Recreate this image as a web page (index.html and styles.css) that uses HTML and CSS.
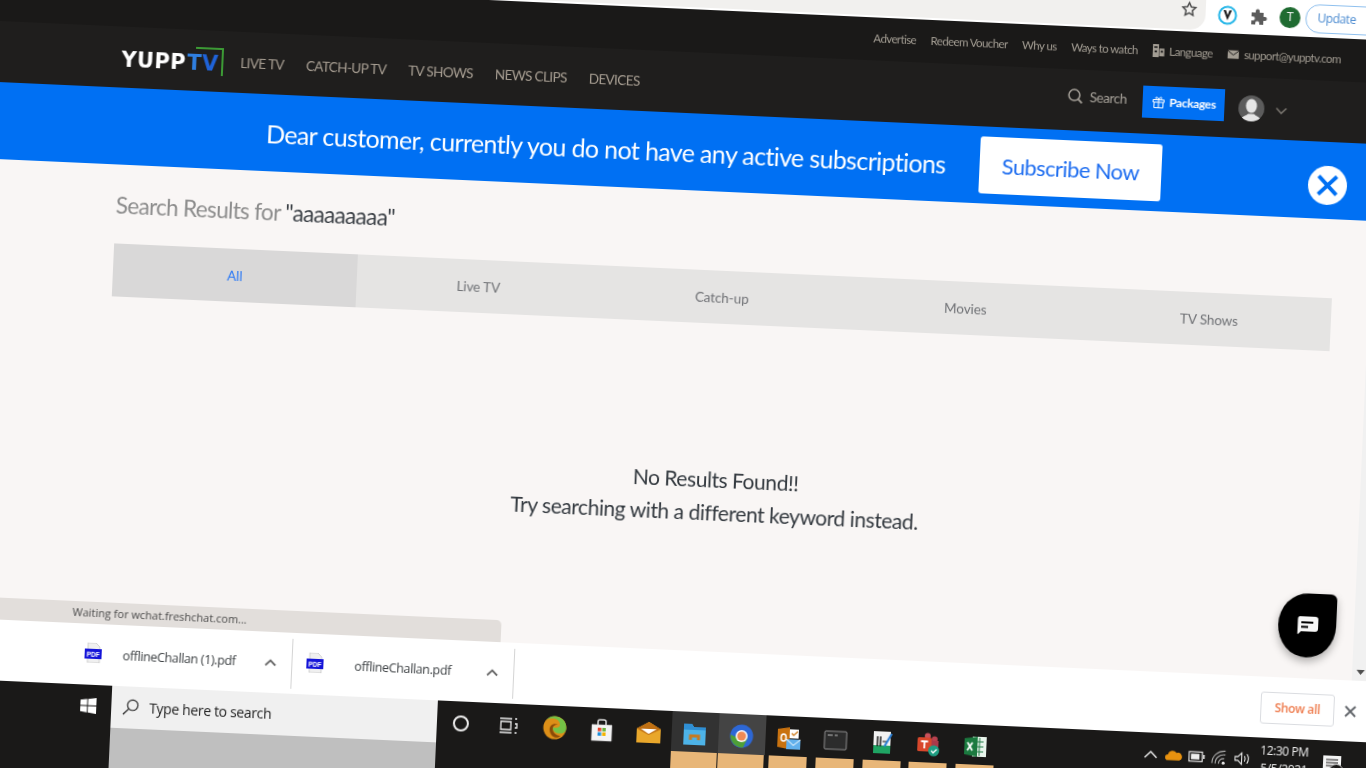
FILE: index.html
```html
<!DOCTYPE html>
<html lang="en">
<head>
<meta charset="utf-8">
<title>YuppTV search</title>
<link rel="stylesheet" href="styles.css">
</head>
<body>
<div class="screen">
  <div class="toolbar">
    <div class="omnibox">
      <svg class="star" viewBox="0 0 20 20"><path d="M10 2.500l2.300 4.900 5.300.7-3.900 3.700 1 5.300-4.700-2.600-4.700 2.600 1-5.300L2.400 8.100l5.300-.7z" fill="none" stroke="#4a4a4a" stroke-width="1.700"/></svg>
    </div>
    <div class="ext-icons">
      <svg class="ext" viewBox="0 0 20 20"><circle cx="10" cy="10" r="8.500" fill="#fff" stroke="#25b6e8" stroke-width="2"/><path d="M5.800 5l4.200 10 4.200-10h-2.500l-1.700 5-1.700-5z" fill="#1b1b1b"/></svg>
      <svg class="ext" viewBox="0 0 20 20"><path d="M3 6h4V4.500a2 2 0 0 1 4 0V6h4v4h1.500a2 2 0 0 1 0 4H15v4h-4v-1.500a2 2 0 0 0-4 0V18H3v-4h1.500a2 2 0 0 0 0-4H3z" fill="#5b5b5b"/></svg>
      <span class="account">T</span>
      <span class="update">Update</span>
    </div>
  </div>

  <div class="topbar">
    <a class="toplink">Advertise</a>
    <a class="toplink">Redeem Voucher</a>
    <a class="toplink">Why us</a>
    <a class="toplink">Ways to watch</a>
    <a class="toplink icon-link"><svg class="mini" viewBox="0 0 14 14"><path d="M1 0h6.500v14H1zM8 4.500h5.500V13H8z" fill="#a39d93"/><path d="M2.500 2.500h3.500V4H2.500zM3 7h2.500v2H3zM9.500 7h2.500v2H9.500z" fill="#1a1918"/></svg>Language</a>
    <a class="toplink icon-link"><svg class="mini" viewBox="0 0 14 14"><path d="M1 3h12v9H1z" fill="#a39d93"/><path d="M1 3.500l6 4.500 6-4.500" fill="none" stroke="#1a1918"/></svg>support@yupptv.com</a>
  </div>

  <header class="header">
    <div class="logo"><span class="logo-w">YUPP</span><span class="logo-t">T</span><span class="logo-v">V</span></div>
    <nav class="nav">
      <a>LIVE TV</a><a>CATCH-UP TV</a><a>TV SHOWS</a><a>NEWS CLIPS</a><a>DEVICES</a>
    </nav>
    <div class="header-right">
      <span class="search"><svg class="search-ico" viewBox="0 0 18 18"><circle cx="8" cy="8" r="5.800" fill="none" stroke="#a8a39b" stroke-width="1.600"/><path d="M12.300 12.300l4 4" stroke="#a8a39b" stroke-width="1.800"/></svg>Search</span>
      <span class="packages"><svg class="gift" viewBox="0 0 14 14"><path d="M1.500 4.500h11v2.500h-11zM2.500 7v5.500h9V7M7 4.500v8M7 4.500C5 4.500 4 3.800 4 2.800 4 1.500 6 1.300 7 4.500c1-3.200 3-3 3-1.700 0 1-1 1.700-3 1.700" fill="none" stroke="#fff" stroke-width="1"/></svg>Packages</span>
      <svg class="avatar" viewBox="0 0 26 26"><defs><clipPath id="av"><circle cx="13" cy="13" r="13"/></clipPath></defs><circle cx="13" cy="13" r="13" fill="#5c5c5c"/><g clip-path="url(#av)"><ellipse cx="13" cy="10.500" rx="5.500" ry="7" fill="#e6e6e6"/><path d="M2 27c.5-6 6-6 8-8.500h6c2 2.500 7.500 2.500 8 8.500z" fill="#e6e6e6"/></g></svg>
      <svg class="chev" viewBox="0 0 12 8"><path d="M1 1.500l5 5 5-5" fill="none" stroke="#77736d" stroke-width="1.600"/></svg>
    </div>
  </header>

  <section class="banner">
    <p class="banner-text">Dear customer, currently you do not have any active subscriptions</p>
    <a class="subscribe">Subscribe Now</a>
    <span class="close"><svg viewBox="0 0 22 22"><path d="M3 3l16 16M19 3L3 19" stroke="#0070f3" stroke-width="3.400"/></svg></span>
  </section>

  <main class="main">
    <div class="content">
      <h1 class="title">Search Results for <span class="query">"aaaaaaaaa"</span></h1>
      <div class="tabs">
        <a class="tab active">All</a><a class="tab">Live TV</a><a class="tab">Catch-up</a><a class="tab">Movies</a><a class="tab">TV Shows</a>
      </div>
      <p class="empty">No Results Found!!<br>Try searching with a different keyword instead.</p>
    </div>
    <div class="scrollbar"><i class="thumb"></i><svg class="scroll-arrow" viewBox="0 0 10 6"><path d="M0 0h10L5 6z" fill="#505050"/></svg></div>
    <div class="status">Waiting for wchat.freshchat.com...</div>
    <div class="chat"><svg viewBox="0 0 24 20"><path d="M4 1h16a3 3 0 0 1 3 3v9a3 3 0 0 1-3 3H6l-3 3-.5-.5V4A3 3 0 0 1 4 1z" fill="#f7f7f7"/><path d="M6 7h12M6 11.500h7" stroke="#000" stroke-width="1.800"/></svg></div>
  </main>

  <div class="shelf">
    <div class="dl dl-one">
      <svg class="pdf" viewBox="0 0 19 20"><path d="M4 0h8l4 4v16H4z" fill="#f0f0f0" stroke="#bbb" stroke-width=".6"/><rect x="1" y="6" width="17" height="10" fill="#1414d8"/><text x="9.500" y="14" class="pdf-t">PDF</text></svg>
      <span class="dl-name one">offlineChallan (1).pdf</span>
      <svg class="dl-chev" viewBox="0 0 12 8"><path d="M1 6.500l5-5 5 5" fill="none" stroke="#6a6a6a" stroke-width="1.800"/></svg>
    </div>
    <div class="dl dl-two">
      <svg class="pdf" viewBox="0 0 19 20"><path d="M4 0h8l4 4v16H4z" fill="#f0f0f0" stroke="#bbb" stroke-width=".6"/><rect x="1" y="6" width="17" height="10" fill="#1414d8"/><text x="9.500" y="14" class="pdf-t">PDF</text></svg>
      <span class="dl-name two">offlineChallan.pdf</span>
      <svg class="dl-chev" viewBox="0 0 12 8"><path d="M1 6.500l5-5 5 5" fill="none" stroke="#6a6a6a" stroke-width="1.800"/></svg>
    </div>
    <span class="showall">Show all</span>
    <svg class="shelf-x" viewBox="0 0 12 12"><path d="M1 1l10 10M11 1L1 11" stroke="#5f6368" stroke-width="1.800"/></svg>
  </div>

  <div class="taskbar">
    <div class="start"><svg class="win" viewBox="0 0 16 16"><path d="M0 2.300l6.700-1v6.300H0zM7.600 1.200L16 0v7.600H7.600zM0 8.400h6.700v6.300L0 13.700zM7.600 8.400H16V16l-8.400-1.200z" fill="#fff"/></svg></div>
    <div class="searchbox">
      <div class="searchfield">
        <svg class="sb-ico" viewBox="0 0 18 18"><circle cx="11" cy="7" r="5.500" fill="none" stroke="#222" stroke-width="1.200"/><path d="M7 11l-6 6" stroke="#222" stroke-width="1.300"/></svg>
        <span>Type here to search</span>
      </div>
    </div>
    <div class="apps">
      <div class="slot"><svg class="app" viewBox="0 0 24 24"><circle cx="12" cy="12" r="7" fill="none" stroke="#eee" stroke-width="2"/></svg></div>
      <div class="slot"><svg class="app" viewBox="0 0 24 24"><path d="M4 5h12M4 19h12M5 8h10v8H5zM19 5h2M19 10h2v4h-2M19 19h2" fill="none" stroke="#eee" stroke-width="1.300"/></svg></div>
      <div class="slot"><svg class="app big" viewBox="0 0 24 24"><circle cx="12" cy="12" r="11.500" fill="#dd8f18"/><path d="M23.500 12A11.500 11.500 0 0 0 3 5c4-4 14-3 14 4 0 2-2 3-4 3-2 0-3-.5-3-.5 0 4 3 6 7 6 4 0 6.500-2 6.500-5.500z" fill="#74c246"/><path d="M7 15c-1-5 4-8 8-6-4 0-5 2-5 4 0 4 4 7 8 7-4 4-10 1-11-5z" fill="#8a4b08"/></svg></div>
      <div class="slot"><svg class="app big" viewBox="0 0 24 24"><path d="M2 7h20v16H2z" fill="#f4f4f4" stroke="#ccc" stroke-width=".5"/><path d="M8 7V4a2 2 0 0 1 2-2h4a2 2 0 0 1 2 2v3" fill="none" stroke="#ddd" stroke-width="1.500"/><rect x="8" y="10" width="3.500" height="3.500" fill="#e8412a"/><rect x="12.500" y="10" width="3.500" height="3.500" fill="#6ab43e"/><rect x="8" y="14.500" width="3.500" height="3.500" fill="#1c8fdc"/><rect x="12.500" y="14.500" width="3.500" height="3.500" fill="#f4b400"/></svg></div>
      <div class="slot"><svg class="app big" viewBox="0 0 24 24"><path d="M0 9l12-7 12 7v14H0z" fill="#e9a72b"/><path d="M0 9l12-7 12 7-12 6z" fill="#bf6f12"/><path d="M4 9h16l-8 5z" fill="#fff"/></svg></div>
      <div class="slot wide s-dark"><svg class="app big" viewBox="0 0 24 24"><path d="M1 2h8l2 3h12v18H1z" fill="#4db3e8"/><path d="M1 2h8l2 3h12v3H1z" fill="#2f8fd4"/><path d="M8 18v-4h8v4" fill="none" stroke="#c77a20" stroke-width="3"/></svg><i class="tan"></i></div>
      <div class="slot wide s-mid"><svg class="app big" viewBox="0 0 24 24"><circle cx="12" cy="12" r="11.500" fill="#2d67d5"/><path d="M1 11A11.500 11.500 0 0 0 14 23.300L18 14H9z" fill="#4e9f37"/><circle cx="12" cy="12" r="6" fill="#fff"/><circle cx="12" cy="12" r="4.500" fill="#ee8a55"/></svg><i class="tan"></i></div>
      <div class="slot"><svg class="app big" viewBox="0 0 24 24"><path d="M1 3l12-2v22L1 21z" fill="#c9720f"/><ellipse cx="7" cy="11.500" rx="2.500" ry="3.500" fill="none" stroke="#fff" stroke-width="1.500"/><path d="M13 3h9v9H13z" fill="#fff"/><path d="M15 7l2 2 4-4" fill="none" stroke="#c9720f" stroke-width="1.200"/><path d="M10 13h14v10H10z" fill="#62b0ec"/><path d="M10 13l7 6 7-6" fill="none" stroke="#fff" stroke-width="1"/></svg><i class="tan"></i></div>
      <div class="slot"><svg class="app big" viewBox="0 0 24 24"><rect x="1" y="3" width="22" height="18" rx="1" fill="#2c2c2c" stroke="#8c8c8c" stroke-width="1"/><path d="M4 7h5M11 7h3" stroke="#bbb"/></svg><i class="tan"></i></div>
      <div class="slot"><svg class="app big" viewBox="0 0 24 24"><path d="M3 1h17v22H3z" fill="#f2f2f2"/><path d="M3 15h17v8H3z" fill="#1fa463"/><path d="M7 6v10M10 6v10" stroke="#1b1b1b" stroke-width="1.500"/><path d="M12 11h4" stroke="#333" stroke-width="1.200"/><path d="M14 16l7-13" stroke="#2a7fd4" stroke-width="2"/></svg><i class="tan"></i></div>
      <div class="slot"><svg class="app big" viewBox="0 0 24 24"><circle cx="18" cy="6.500" r="3" fill="#b9424f"/><circle cx="11" cy="3.500" r="3" fill="#c9505a"/><path d="M10 8h12v8a5 5 0 0 1-10 0z" fill="#a93a4a"/><rect x="1" y="5" width="14" height="14" rx="1.500" fill="#d8472b"/><path d="M4.500 9h7M8 9v7" stroke="#fff" stroke-width="1.800"/><circle cx="17.500" cy="18" r="5.500" fill="#1f9e83"/><path d="M15 18l2 2 3.500-3.500" fill="none" stroke="#fff" stroke-width="1.300"/></svg><i class="tan"></i></div>
      <div class="slot"><svg class="app big" viewBox="0 0 24 24"><path d="M9 2h14v20H9z" fill="#e9f5ec"/><path d="M12 7h8M12 12h8M12 17h8M16 3v18" stroke="#1e7a45" stroke-width="1"/><path d="M1 4l13-2v20L1 20z" fill="#1b7a3f"/><path d="M4 8l5 8M9 8l-5 8" stroke="#fff" stroke-width="1.700"/></svg><i class="tan"></i></div>
    </div>
    <div class="tray">
      <svg class="tray-ico" viewBox="0 0 16 16"><path d="M2 11l6-6 6 6" fill="none" stroke="#eee" stroke-width="1.400"/></svg>
      <svg class="tray-ico" viewBox="0 0 18 16"><path d="M3 13a3 3 0 0 1 0-6 5 5 0 0 1 9-2 4 4 0 0 1 3 8z" fill="#e8920f"/></svg>
      <svg class="tray-ico" viewBox="0 0 18 16"><rect x="1" y="3" width="14" height="10" fill="none" stroke="#eee" stroke-width="1.200"/><rect x="3" y="5" width="9" height="6" fill="#eee"/><path d="M16 6h1.500v4H16" fill="#eee"/></svg>
      <svg class="tray-ico" viewBox="0 0 18 16"><path d="M1 14A13 13 0 0 1 15 1M4.500 14.500A9 9 0 0 1 15 5M8 14.500a5 5 0 0 1 6-5.500" fill="none" stroke="#aaa" stroke-width="1.200"/><circle cx="13" cy="13.500" r="1.600" fill="#eee"/></svg>
      <svg class="tray-ico" viewBox="0 0 18 16"><path d="M1 6h3l4-4v12l-4-4H1zM11 5c1 2 1 4 0 6M13.500 3c2 3 2 7 0 10" fill="none" stroke="#eee" stroke-width="1.100"/></svg>
      <div class="clock"><span>12:30 PM</span><span>5/5/2021</span></div>
      <div class="notif"><svg class="notif-ico" viewBox="0 0 20 20"><path d="M1 1h18v14H11l-4 4v-4H1z" fill="#f4f4f4"/><path d="M4 5h12M4 8h12M4 11h8" stroke="#1a1918" stroke-width="1.200"/></svg><span class="badge">19</span></div>
    </div>
  </div>
</div>
</body>
</html>
```
FILE: styles.css
```css
* { box-sizing: border-box; }
html, body { margin: 0; height: 100%; overflow: hidden; background: #1a1918; }
body { font-family: Lato, "Open Sans", sans-serif; }
a { color: inherit; text-decoration: none; }
p, h1 { margin: 0; font-weight: 400; }

.screen {
  width: 1398px;
  display: flex;
  flex-direction: column;
  transform-origin: 0 0;
  transform: rotate(2.58deg) translateY(-100px);
  filter: blur(0.35px);
}

/* browser toolbar */
.toolbar { height: 78px; background: #fff; display: flex; align-items: flex-end; padding-bottom: 2px; }
.omnibox { width: 1205px; height: 50px; background: #f1f0ee; border-radius: 0 15px 15px 0; display: flex; justify-content: flex-end; padding: 5px 8px 0 0; align-items: flex-start; }
.star { width: 17px; height: 17px; margin-top: 16px; }
.ext-icons { display: flex; align-items: center; padding-left: 12px; gap: 11px; margin-bottom: 2px; }
.ext { width: 20px; height: 20px; flex: none; }
.account { width: 21px; height: 21px; border-radius: 50%; background: #1f6b31; color: #f3f3f3; font: 12px/21px Roboto, sans-serif; text-align: center; flex: none; }
.update { border: 1.500px solid #8fc0ee; border-radius: 14px; height: 29px; width: 80px; padding-left: 11px; margin-left: -6px; color: #4a8ad0; font: 12px/26px "Open Sans", sans-serif; letter-spacing: -0.45px; flex: none; }

/* top links */
.topbar { height: 43px; background: #1a1918; display: flex; justify-content: flex-end; align-items: center; gap: 14.500px; padding: 0 56px 3px 0; color: #a39d93; font-size: 11.500px; letter-spacing: -0.6px; }
.icon-link { display: flex; align-items: center; gap: 4px; }
.mini { width: 13px; height: 13px; }

/* site header */
.header { height: 61px; background: #1f1e1d; display: flex; align-items: center; padding: 0 107px 0 124px; }
.logo { width: 102px; height: 26px; font: 700 21px/26px "DejaVu Sans", sans-serif; letter-spacing: 0.4px; white-space: nowrap; position: relative; border-top: 2px solid transparent; }
.logo-w { color: #fff; }
.logo-t { color: #2f7fe0; margin-left: 1px; }
.logo-v { color: #1f63d8; }
.logo::after { content: ""; position: absolute; right: 0; top: -3px; width: 26px; height: 26px; border-top: 2px solid #3c9a35; border-right: 2px solid #3c9a35; }
.nav { display: flex; gap: 22px; margin-left: 17px; color: #a89f93; font-size: 13.500px; letter-spacing: -0.6px; white-space: nowrap; }
.header-right { margin-left: auto; display: flex; align-items: center; }
.search { display: flex; align-items: center; gap: 6px; color: #a8a39b; font-size: 13.500px; letter-spacing: -0.45px; margin-top: -8px; }
.search-ico { width: 17px; height: 17px; }
.packages { margin-left: 16px; margin-top: -4px; width: 82px; height: 32px; background: #0070f3; color: #fff; display: flex; align-items: center; justify-content: center; gap: 4px; font-size: 12px; font-weight: 700; letter-spacing: -0.35px; }
.gift { width: 14px; height: 14px; }
.avatar { width: 26px; height: 26px; margin-left: 14px; }
.chev { width: 12px; height: 8px; margin-left: 11px; margin-top: 3px; }

/* banner */
.banner { height: 77px; background: #0070f3; display: flex; align-items: center; padding-left: 272px; }
.banner-text { width: 680px; color: #fff; font-size: 25px; letter-spacing: -0.62px; white-space: nowrap; flex: none; }
.subscribe { margin-left: 34px; width: 182px; height: 57px; background: #fff; border-radius: 3px; color: #1f6ef0; font-size: 22px; letter-spacing: -0.6px; display: flex; align-items: center; justify-content: center; flex: none; }
.close { margin-left: 147px; margin-top: 10px; width: 39px; height: 39px; border-radius: 50%; background: #fff; display: flex; align-items: center; justify-content: center; flex: none; }
.close svg { width: 25px; height: 25px; }

/* main */
.main { height: 460px; background: #f9f6f5; display: flex; position: relative; }
.content { flex: 1; padding: 26px 37px 0 125px; }
.title { font-size: 22.500px; line-height: 29px; color: #8c8c8c; letter-spacing: -0.66px; white-space: nowrap; }
.query { color: #3a3f45; }
.tabs { display: flex; width: 1219px; height: 53px; margin-top: 24px; background: #e5e4e3; }
.tab { flex: 1; display: flex; align-items: center; justify-content: center; color: #707276; font-size: 13.500px; letter-spacing: -0.1px; }
.tab.active { background: #d9d8d8; color: #2b79f5; }
.empty { margin-top: 139px; width: 1219px; padding-left: 4px; text-align: center; font-size: 21px; line-height: 33px; color: #33393f; letter-spacing: -0.44px; }
.scrollbar { width: 18px; background: #f1f1f1; display: flex; flex-direction: column; align-items: center; padding-bottom: 6px; }
.thumb { display: block; width: 15px; height: 139px; background: #c1c1c1; flex: none; }
.scroll-arrow { width: 9px; height: 5px; margin-top: auto; }
.status { position: absolute; left: 0; bottom: 0; width: 529px; height: 22px; background: #e2dedb; border-radius: 0 5px 0 0; padding-left: 100px; color: #4b4b4b; font: 11px/22px "Open Sans", sans-serif; }
.chat { position: absolute; left: 1305px; top: 375px; width: 58px; height: 64px; background: #000; border-radius: 50% 6px 50% 50%; box-shadow: 0 4px 8px rgba(0,0,0,.3); display: flex; align-items: center; justify-content: center; }
.chat svg { width: 24px; height: 20px; }

/* downloads shelf */
.shelf { height: 61px; background: #fff; display: flex; align-items: center; padding-right: 11px; }
.dl { display: flex; align-items: center; height: 50px; border-right: 1px solid #d4d4d4; flex: none; padding-right: 15px; }
.dl-one { width: 322px; padding-left: 113px; }
.dl-two { width: 222px; padding-left: 13px; }
.pdf { width: 19px; height: 20px; margin-top: -3px; flex: none; }
.pdf-t { font: 700 6.500px "Liberation Sans", sans-serif; fill: #fff; text-anchor: middle; }
.dl-name { font: 12.500px "Open Sans", sans-serif; color: #3c4043; letter-spacing: -0.35px; white-space: nowrap; }
.dl-name.one { margin-left: 20px; }
.dl-name.two { margin-left: 30px; }
.dl-chev { width: 12px; height: 8px; margin-left: auto; }
.showall { margin-left: auto; width: 74px; height: 32px; border: 1px solid #dadce0; border-radius: 3px; color: #ee7b4d; font: 600 12px/30px "Open Sans", sans-serif; text-align: center; letter-spacing: -0.3px; }
.shelf-x { width: 12px; height: 12px; margin-left: 10px; }

/* taskbar */
.taskbar { height: 130px; background: #1a1918; display: flex; align-items: flex-start; }
.start { width: 143px; height: 42px; display: flex; align-items: center; justify-content: flex-end; padding-right: 15px; }
.win { width: 16px; height: 16px; }
.searchbox { width: 326px; height: 130px; background: #bfbfbf; }
.searchfield { height: 42px; background: #f0f0f0; display: flex; align-items: center; padding: 0 0 2px 11px; gap: 10px; color: #222; font: 14px "Open Sans", sans-serif; letter-spacing: -0.35px; }
.sb-ico { width: 17px; height: 17px; }
.apps { display: flex; margin-left: 1px; }
.slot { width: 46.800px; height: 130px; display: flex; flex-direction: column; align-items: center; padding-top: 10px; }
.s-dark { background: linear-gradient(#323232 40px, #1a1918 40px); }
.s-mid { background: linear-gradient(#444 40px, #1a1918 40px); }
.app { width: 24px; height: 24px; flex: none; }
.tan { display: block; width: 38px; height: 60px; background: #e8b678; margin-top: 6px; }
.wide .tan { width: 46px; }
.tray { margin-left: auto; display: flex; align-items: flex-start; padding-top: 14px; gap: 6px; }
.tray-ico { width: 17px; height: 16px; flex: none; }
.clock { display: flex; flex-direction: column; align-items: center; width: 50px; margin: -10.500px 0 0 2px; color: #eee; font: 12px/18px "Open Sans", sans-serif; letter-spacing: -0.4px; white-space: nowrap; }
.notif { position: relative; margin: 0 23px 0 7px; width: 20px; height: 20px; }
.notif-ico { width: 20px; height: 20px; }
.badge { position: absolute; left: 7px; top: 9px; width: 15px; height: 15px; border: 1px solid #bbb; border-radius: 50%; background: #1a1918; color: #eee; font: 9px/13px "Open Sans", sans-serif; text-align: center; }
```
